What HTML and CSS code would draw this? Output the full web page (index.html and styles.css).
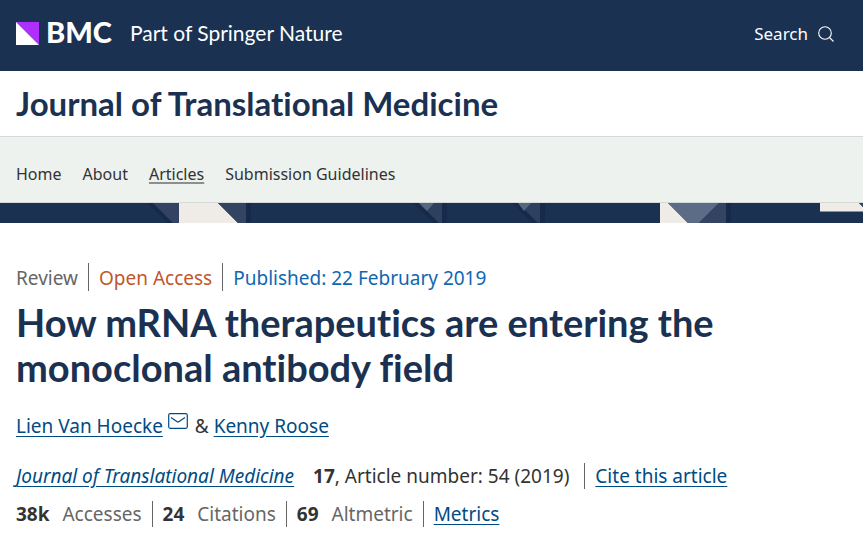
FILE: index.html
```html
<!DOCTYPE html>
<html lang="en">
<head>
    <meta charset="UTF-8">
    <meta name="viewport" content="width=device-width, initial-scale=1.0">
    <title>How mRNA therapeutics are entering the monoclonal antibody field</title>
    <link rel="stylesheet" href="styles.css">
</head>
<body>
    <header class="top">
        <a class="logo" href="#">
            <svg class="logo-mark" viewBox="0 0 23 23" aria-hidden="true">
                <path fill="#b02fff" d="M0 0h23v23z"/>
                <path fill="#fff" d="M0 0v23h23z"/>
            </svg>
            <span class="logo-name">BMC</span>
            <span class="logo-part">Part of Springer Nature</span>
        </a>
        <button class="search" type="button">
            Search
            <svg class="search-icon" viewBox="0 0 16 16" aria-hidden="true">
                <circle cx="7" cy="7" r="6.3"/>
                <path d="M11.5 11.5l4 4"/>
            </svg>
        </button>
    </header>

    <div class="journal">
        <a class="journal-name" href="#">Journal of Translational Medicine</a>
    </div>

    <nav class="menu">
        <ul>
            <li><a href="#">Home</a></li>
            <li><a href="#">About</a></li>
            <li class="current"><a href="#">Articles</a></li>
            <li><a href="#">Submission Guidelines</a></li>
        </ul>
    </nav>

    <!-- banner pattern -->
    <svg class="banner" aria-hidden="true">
        <path fill="#182a4c" d="M147 0h6l20 20h-6z"/>
        <path fill="#334163" d="M153 0h26v20h-6z"/>
        <path fill="#efebe7" d="M179 0h39l20 20h-59z"/>
        <path fill="#324462" d="M218 0h28v20h-8z"/>
        <path fill="#182a4c" d="M246 0h5v20h-5z"/>

        <path fill="#182a4c" d="M413 0h6l20 20h-6z"/>
        <path fill="#2c415d" d="M419 0h23v20h-3z"/>
        <path fill="#566880" d="M419 0h15l-7 8z"/>
        <path fill="#182a4c" d="M442 0h5v20h-5z"/>

        <path fill="#182a4c" d="M512 0h6l20 20h-6z"/>
        <path fill="#2c415d" d="M518 0h22v20h-2z"/>
        <path fill="#566880" d="M518 0h13l-7 8z"/>
        <path fill="#182a4c" d="M540 0h5v20h-5z"/>

        <path fill="#efebe7" d="M660 0h8l20 20h-28z"/>
        <path fill="#5c6b86" d="M668 0h51l-20 20h-11z"/>
        <path fill="#324462" d="M719 0h7v20h-27z"/>
        <path fill="#182a4c" d="M726 0h5v20h-5z"/>

        <path fill="#efebe7" d="M820 0h39l8 8h-47z"/>
        <path fill="#324462" d="M859 0h28v8h-20z"/>
        <path fill="#8a8f98" d="M820 8h67v1h-67z"/>
    </svg>

    <main class="article">
        <ul class="info">
            <li>Review</li>
            <li class="open">Open Access</li>
            <li><a href="#">Published: 22 February 2019</a></li>
        </ul>

        <h1>How mRNA therapeutics are entering the monoclonal antibody field</h1>

        <p class="authors">
            <a href="#">Lien Van Hoecke</a>
            <svg class="mail" viewBox="0 0 20 16" aria-hidden="true">
                <rect x=".7" y=".7" width="18.6" height="14.6" rx="1.5"/>
                <path d="M3 4.5l5.8 4q1.2.8 2.4 0l5.8-4"/>
            </svg>
            &amp; <a href="#">Kenny Roose</a>
        </p>

        <div class="details">
            <p><a class="source" href="#">Journal of Translational Medicine</a> <b>17</b>, Article number: 54 (2019)</p>
            <a class="cite" href="#">Cite this article</a>
        </div>

        <ul class="metrics">
            <li><b>38k</b> Accesses</li>
            <li><b>24</b> Citations</li>
            <li><b>69</b> Altmetric</li>
            <li><a href="#">Metrics</a></li>
        </ul>
    </main>
</body>
</html>
```
FILE: styles.css
```css
* {margin: 0; padding: 0; box-sizing: border-box;}
body {background-color: #fff; color: #333; font-family: "Noto Sans", "Open Sans", sans-serif; font-size: 19px; line-height: 26px;}
ul {list-style: none;}
a {color: #004b83;}

/* header */
.top {display: flex; justify-content: space-between; align-items: center; padding: 12px 29px 16px 16px; min-height: 71px; background-color: #1a3152;}
.logo {display: flex; align-items: center; color: #fff; text-decoration: none; font-family: Lato, sans-serif; font-variant-ligatures: none;}
.logo-mark {width: 23px; height: 23px; margin-right: 7px;}
.logo-name {padding-bottom: 3px; font-size: 29px; font-weight: 900;}
.logo-part {margin-left: 18px; padding-bottom: 2px; font-size: 21px;}
.search {display: flex; align-items: center; gap: 10px; border: 0; background: none; color: #fff; font-family: inherit; font-size: 17px; cursor: pointer;}
.search-icon {width: 16px; height: 16px; fill: none; stroke: #fff; stroke-width: 1.1;}

.journal {padding: 12px 16px; border-bottom: 1px solid #d5d9d8;}
.journal-name {display: block; color: #1a3152; font-family: Lato, sans-serif; font-size: 33px; font-weight: bold; line-height: 41px; text-decoration: none; font-variant-ligatures: none;}

/* menu */
.menu {padding: 24px 16px 15px; background-color: #edf2ee; border-bottom: 1px solid #d5d9d8;}
.menu ul {display: flex; flex-wrap: wrap; gap: 0 21px;}
.menu a {display: block; color: #333; font-size: 16px; text-decoration: none;}
.menu .current a {text-decoration: underline 2px #8c8f8d; text-underline-offset: 2px;}
.banner {display: block; width: 100%; height: 20px; background-color: #1a3152;}

/* article */
.article {padding: 40px 16px 16px;}
.info, .metrics {display: flex; flex-wrap: wrap;}
.info li, .metrics li {color: #666;}
.info li + li, .metrics li + li, .cite {margin-left: 10px; padding-left: 10px; border-left: 1px solid #666;}
.info .open {color: #c1562c;}
.info a {color: #0f67b1; text-decoration: none;}
.info li {padding-top: 2px;}
h1 {margin: 9px 0 23px; color: #1a3152; font-family: Lato, sans-serif; font-size: 38px; line-height: 45px; font-variant-ligatures: none;}
.authors {margin-bottom: 24px;}
.authors a, .details a, .metrics a {text-underline-offset: 3px;}
.mail {width: 20px; height: 16px; margin-right: 2px; vertical-align: 4px; fill: none; stroke: #004b83; stroke-width: 1.2;}
.details {display: flex; flex-wrap: wrap; margin-bottom: 12px;}
.source {margin-right: 14px; font-style: italic;}
.cite {margin-left: 15px;}
.metrics b {margin-right: 8px; color: #333;}
```
